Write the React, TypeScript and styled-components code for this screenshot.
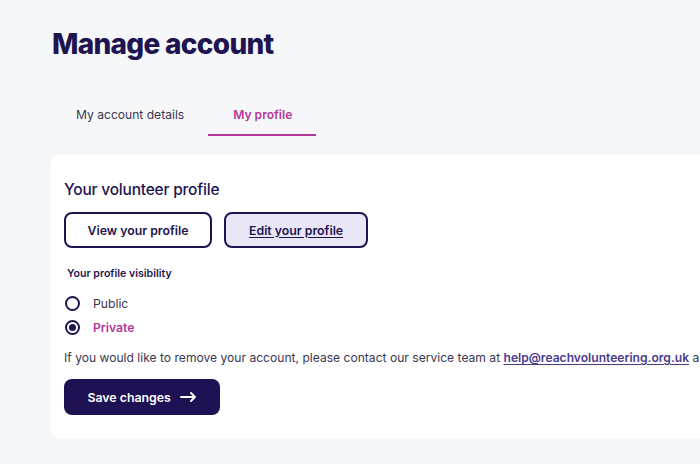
import React from "react";
import styled, { createGlobalStyle } from "styled-components";

const Global = createGlobalStyle`
  html, body { margin: 0; padding: 0; overflow: hidden; background: #f6f7f9; }
  body { font-family: Inter, "Noto Sans", sans-serif; color: #1e1550; }
  * { box-sizing: border-box; }
`;

const Page = styled.div`
  width: 700px;
  height: 464px;
  padding: 28px 0 0 51px;
  display: flex;
  flex-direction: column;
`;

const Title = styled.h1`
  margin: 0 0 0 1px;
  font-size: 28px;
  line-height: 32px;
  font-weight: 800;
  letter-spacing: -0.7px;
  color: #1e1550;
`;

const Tabs = styled.div`
  display: flex;
  margin-top: 34px;
`;

const Tab = styled.button<{ $active?: boolean }>`
  background: none;
  border: none;
  padding: 0 24px 0 25px;
  height: 42px;
  font-family: Inter, sans-serif;
  font-size: 12.1px;
  font-weight: ${(p) => (p.$active ? 600 : 400)};
  color: ${(p) => (p.$active ? "#b5379b" : "#3a3652")};
  border-bottom: 2px solid ${(p) => (p.$active ? "#b5379b" : "transparent")};
  cursor: pointer;
`;

const Card = styled.section`
  margin-top: 19px;
  width: 900px;
  background: #ffffff;
  border-radius: 10px;
  padding: 25px 13px 24px;
  display: flex;
  flex-direction: column;
`;

const CardTitle = styled.h2`
  margin: 0;
  font-size: 15.5px;
  line-height: 20px;
  font-weight: 500;
  letter-spacing: -0.2px;
  color: #1e1550;
`;

const ButtonRow = styled.div`
  display: flex;
  gap: 12px;
  margin-top: 12px;
`;

const OutlineButton = styled.button<{ $filled?: boolean }>`
  height: 36px;
  padding: 0 ${(p) => (p.$filled ? "23px" : "21.5px")};
  border: 2px solid #1e1550;
  border-radius: 8px;
  background: ${(p) => (p.$filled ? "#e9e6f6" : "#ffffff")};
  font-family: Inter, sans-serif;
  font-size: 12.3px;
  font-weight: 600;
  color: #1e1550;
  text-decoration: ${(p) => (p.$filled ? "underline" : "none")};
  text-underline-offset: 2px;
  cursor: pointer;
`;

const Legend = styled.div`
  margin: 19px 0 0 3px;
  font-size: 10.6px;
  line-height: 14px;
  font-weight: 600;
  color: #1e1550;
`;

const RadioList = styled.div`
  display: flex;
  flex-direction: column;
  gap: 6px;
  margin-top: 13px;
`;

const RadioRow = styled.label`
  display: flex;
  align-items: center;
  gap: 13px;
  height: 18px;
  padding-left: 1px;
`;

const Circle = styled.span<{ $checked?: boolean }>`
  width: 15px;
  height: 15px;
  border-radius: 50%;
  border: 2px solid #1e1550;
  display: flex;
  align-items: center;
  justify-content: center;
  &::after {
    content: "";
    width: 7px;
    height: 7px;
    border-radius: 50%;
    background: ${(p) => (p.$checked ? "#1e1550" : "transparent")};
  }
`;

const RadioLabel = styled.span<{ $checked?: boolean }>`
  font-size: 12.2px;
  font-weight: ${(p) => (p.$checked ? 600 : 400)};
  color: ${(p) => (p.$checked ? "#b5379b" : "#3a3652")};
`;

const Note = styled.p`
  margin: 14px 0 0;
  font-size: 12.1px;
  line-height: 16px;
  color: #3a3652;
  white-space: nowrap;
`;

const Link = styled.a`
  color: #4a3b8c;
  font-weight: 600;
  text-decoration: underline;
  text-underline-offset: 2px;
`;

const SaveButton = styled.button`
  margin-top: 13px;
  align-self: flex-start;
  height: 36px;
  padding: 0 23.5px;
  border: none;
  border-radius: 8px;
  background: #1e1254;
  color: #ffffff;
  font-family: Inter, sans-serif;
  font-size: 12.3px;
  font-weight: 600;
  display: flex;
  align-items: center;
  gap: 9px;
  cursor: pointer;
`;

const Arrow = () => (
  <svg width="17" height="10" viewBox="0 0 17 10" fill="none">
    <path d="M1 5h14M11 1l4 4-4 4" stroke="#fff" strokeWidth="1.8" strokeLinecap="round" strokeLinejoin="round" />
  </svg>
);

export default function App() {
  return (
    <>
      <Global />
      <Page>
        <Title>Manage account</Title>
        <Tabs>
          <Tab>My account details</Tab>
          <Tab $active>My profile</Tab>
        </Tabs>
        <Card>
          <CardTitle>Your volunteer profile</CardTitle>
          <ButtonRow>
            <OutlineButton>View your profile</OutlineButton>
            <OutlineButton $filled>Edit your profile</OutlineButton>
          </ButtonRow>
          <Legend>Your profile visibility</Legend>
          <RadioList>
            <RadioRow>
              <Circle />
              <RadioLabel>Public</RadioLabel>
            </RadioRow>
            <RadioRow>
              <Circle $checked />
              <RadioLabel $checked>Private</RadioLabel>
            </RadioRow>
          </RadioList>
          <Note>
            If you would like to remove your account, please contact our service team at{" "}
            <Link href="#">help@reachvolunteering.org.uk</Link> and we will be happy to help.
          </Note>
          <SaveButton>
            Save changes <Arrow />
          </SaveButton>
        </Card>
      </Page>
    </>
  );
}
